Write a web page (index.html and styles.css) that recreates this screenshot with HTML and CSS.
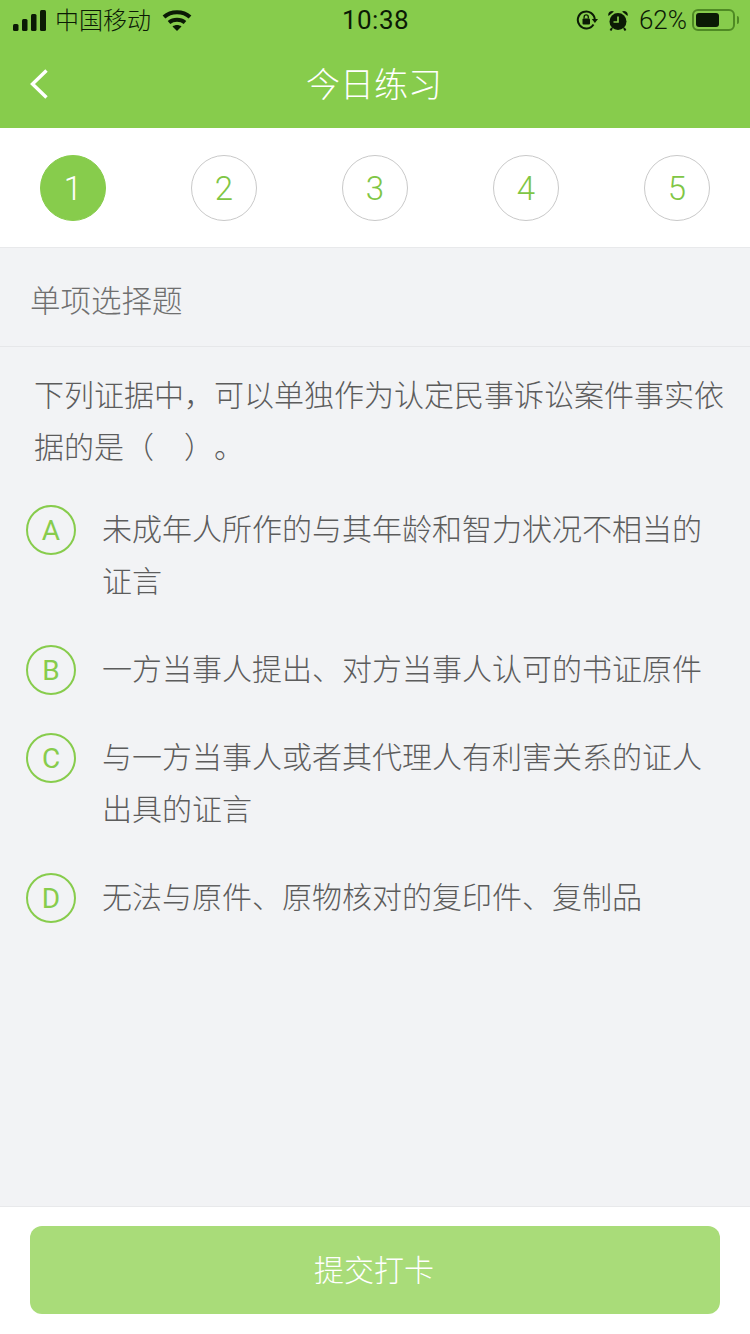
FILE: index.html
```html
<!DOCTYPE html>
<html lang="zh-CN">
<head>
    <meta charset="UTF-8">
    <meta name="viewport" content="width=device-width, initial-scale=1.0">
    <title>今日练习</title>
    <link rel="stylesheet" href="styles.css">
</head>
<body>
    <header class="top">
        <div class="status-bar">
            <div class="status-left">
                <svg class="signal" width="33" height="21" viewBox="0 0 33 21"><rect x="0" y="14" width="5.500" height="7" rx="1.500"/><rect x="9" y="9" width="5.500" height="12" rx="1.500"/><rect x="18" y="4" width="5.500" height="17" rx="1.500"/><rect x="27" y="0" width="6" height="21" rx="1.500"/></svg>
                <span class="carrier">中国移动</span>
                <svg class="wifi" width="30" height="22" viewBox="0 0 30 22"><path d="M2 8C9 1.500 21 1.500 28 8" fill="none" stroke="#0b1a05" stroke-width="4"/><path d="M7 13.500C11.500 9.800 18.500 9.800 23 13.500" fill="none" stroke="#0b1a05" stroke-width="4"/><path d="M10.500 17.500C13 15.500 17 15.500 19.500 17.500L15 22Z"/></svg>
            </div>
            <div class="status-time">10:38</div>
            <div class="status-right">
                <svg class="lock" width="22" height="20" viewBox="0 0 22 20"><path d="M17.500 14.500A8.500 8.500 0 1 1 18.800 9.500" fill="none" stroke="#0b1a05" stroke-width="2"/><path d="M15.800 9L22 9L18.900 13Z"/><rect x="6.500" y="8.500" width="7.500" height="6" rx="1"/><path d="M8.100 8.500V7a2.100 2.100 0 0 1 4.200 0V8.500" fill="none" stroke="#0b1a05" stroke-width="1.300"/></svg>
                <svg class="alarm" width="20" height="21" viewBox="0 0 20 21"><circle cx="10" cy="11.500" r="8.500"/><path d="M.5 6A3.800 3.800 0 0 1 6 1.500ZM19.500 6A3.800 3.800 0 0 0 14 1.500Z"/><path d="M10 6.500V12H5.500" fill="none" stroke="#87cc4c" stroke-width="1.700"/><path d="M4 18L2.500 20.500M16 18L17.500 20.500" stroke="#0b1a05" stroke-width="2"/></svg>
                <span class="battery-num">62%</span>
                <div class="battery"><div class="battery-level"></div></div>
                <div class="battery-cap"></div>
            </div>
        </div>
        <div class="nav-bar">
            <svg class="back" width="20" height="32" viewBox="0 0 20 32"><path d="M17.500 2.500L3.500 16L17.500 29.500" fill="none" stroke="#fff" stroke-width="3.400"/></svg>
            <h1>今日练习</h1>
        </div>
    </header>

    <div class="steps">
        <div class="step active">1</div>
        <div class="step">2</div>
        <div class="step">3</div>
        <div class="step">4</div>
        <div class="step">5</div>
    </div>

    <main class="content">
        <div class="q-type">单项选择题</div>
        <p class="question">下列证据中，可以单独作为认定民事诉讼案件事实依据的是（　）。</p>
        <ul class="options">
            <li class="option"><span class="letter">A</span><span class="option-text">未成年人所作的与其年龄和智力状况不相当的证言</span></li>
            <li class="option"><span class="letter">B</span><span class="option-text">一方当事人提出、对方当事人认可的书证原件</span></li>
            <li class="option"><span class="letter">C</span><span class="option-text">与一方当事人或者其代理人有利害关系的证人出具的证言</span></li>
            <li class="option"><span class="letter">D</span><span class="option-text">无法与原件、原物核对的复印件、复制品</span></li>
        </ul>
    </main>

    <footer class="bottom">
        <button class="submit">提交打卡</button>
    </footer>
</body>
</html>
```

FILE: styles.css
```css
* {
    box-sizing: border-box;
}
html, body {
    margin: 0;
    padding: 0;
}
body {
    width: 750px;
    height: 1334px;
    display: flex;
    flex-direction: column;
    overflow: hidden;
    background-color: #f2f3f5;
    font-family: "Roboto", "Noto Sans CJK SC", sans-serif;
    font-weight: 300;
    text-spacing-trim: space-all;
}
.top {
    background-color: #87cc4c;
    height: 128px;
}
.status-bar {
    height: 40px;
    display: grid;
    grid-template-columns: 1fr auto 1fr;
    align-items: center;
    padding: 0 11px 0 13px;
    color: #0b1a05;
}
.status-bar svg {
    fill: #0b1a05;
    display: block;
    flex: none;
}
.status-left, .status-right {
    display: flex;
    align-items: center;
}
.status-right {
    justify-content: flex-end;
}
.carrier {
    font-size: 24px;
    margin: -3px 0 0 9px;
}
.wifi {
    margin-left: 11px;
}
.status-time {
    font-size: 26px;
    font-weight: 400;
    letter-spacing: 0.5px;
    margin-right: 1px;
}
.lock {
    margin-right: 10px;
}
.alarm {
    margin-right: 11px;
}
.battery-num {
    font-size: 26px;
}
.battery {
    width: 43px;
    height: 22px;
    margin-left: 5px;
    padding: 2px;
    border: 2px solid #4f8a24;
    border-radius: 6px;
}
.battery-level {
    width: 23px;
    height: 100%;
    background-color: #0b1a05;
    border-radius: 3px;
}
.battery-cap {
    width: 2px;
    height: 8px;
    margin-left: 2px;
    background-color: #4f8a24;
    border-radius: 0 2px 2px 0;
}
.nav-bar {
    height: 88px;
    position: relative;
    display: flex;
    align-items: center;
    justify-content: center;
}
.back {
    position: absolute;
    left: 29px;
    top: 28px;
}
.nav-bar h1 {
    margin: 0 2px 4px 0;
    font-size: 34px;
    font-weight: 300;
    color: #fff;
}
.steps {
    height: 120px;
    padding: 27px 40px 0;
    display: flex;
    justify-content: space-between;
    align-items: flex-start;
    background-color: #fff;
    border-bottom: 1px solid #e8e9eb;
}
.step {
    width: 66px;
    height: 66px;
    display: flex;
    align-items: center;
    justify-content: center;
    border: 1px solid #c9c9c9;
    border-radius: 50%;
    font-size: 33px;
    color: #7fc645;
    background-color: #fff;
}
.step.active {
    border-color: #87cc4c;
    background-color: #87cc4c;
    color: #fff;
}
.content {
    flex: 1;
}
.q-type {
    height: 99px;
    padding: 4px 0 0 30px;
    display: flex;
    align-items: center;
    border-bottom: 1px solid #e6e7e9;
    font-size: 30.500px;
    color: #6f6f6f;
}
.question {
    margin: 23px 20px 30px 34px;
    font-size: 30px;
    line-height: 52px;
    color: #5c5c5c;
}
.options {
    list-style: none;
    margin: 0;
    padding: 0 30px 0 26px;
}
.option {
    display: flex;
    align-items: flex-start;
    margin-bottom: 36px;
}
.letter {
    flex: none;
    width: 50px;
    height: 50px;
    margin-top: 1px;
    display: flex;
    align-items: center;
    justify-content: center;
    border: 2px solid #87cc4c;
    border-radius: 50%;
    font-size: 28px;
    font-weight: 400;
    color: #87cc4c;
}
.option-text {
    margin-left: 26px;
    font-size: 30px;
    line-height: 52px;
    color: #5c5c5c;
}
.bottom {
    height: 128px;
    padding: 19px 30px 0;
    background-color: #fff;
    border-top: 1px solid #e8e9eb;
}
.submit {
    display: block;
    width: 100%;
    height: 88px;
    padding: 0 2px 4px 0;
    border: none;
    border-radius: 12px;
    background-color: #a9dc79;
    color: #fff;
    font-family: inherit;
    font-weight: 300;
    font-size: 30px;
}
```
